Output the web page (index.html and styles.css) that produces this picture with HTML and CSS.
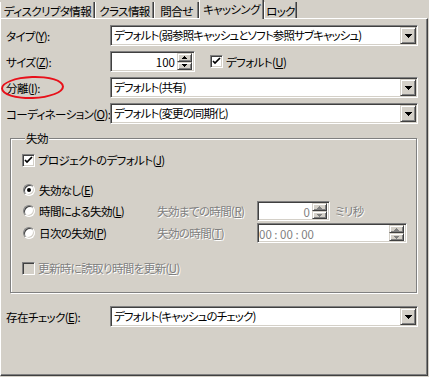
FILE: index.html
```html
<!DOCTYPE html>
<html>
<head>
    <title>キャッシング</title>
    <link rel="stylesheet" href="styles.css">
</head>
<body>
    <div class="tabs">
        <div class="tab" style="width: 95px">ディスクリプタ情報</div>
        <div class="tab" style="width: 59px">クラス情報</div>
        <div class="tab" style="width: 45px">問合せ</div>
        <div class="tab active" style="width: 65px">キャッシング</div>
        <div class="tab" style="width: 33px">ロック</div>
    </div>

    <div class="panel">
        <div class="field">
            <label class="lbl">タイプ(<u>Y</u>):</label>
            <div class="combo">
                <span class="combo-text">デフォルト(弱参照キャッシュとソフト参照サブキャッシュ)</span>
                <span class="btn drop"><svg width="7" height="4"><path d="M0 0h7l-3.5 4z"/></svg></span>
            </div>
        </div>

        <div class="field">
            <label class="lbl">サイズ(<u>Z</u>):</label>
            <div class="size-row">
                <div class="box spin size">
                    <span class="val">100</span>
                    <span class="spin-btns">
                        <span class="btn up"><svg width="5" height="3"><path d="M2.5 0l2.5 3h-5z"/></svg></span>
                        <span class="btn down"><svg width="5" height="3"><path d="M0 0h5l-2.5 3z"/></svg></span>
                    </span>
                </div>
                <span class="check-row">
                    <span class="check"><svg width="9" height="9"><path d="M1 4l2 2 5-5" fill="none" stroke="#000" stroke-width="1.7"/></svg></span>
                    <span>デフォルト(<u>U</u>)</span>
                </span>
            </div>
        </div>

        <div class="field">
            <label class="lbl marked">分離(<u>I</u>):<span class="ring"></span></label>
            <div class="combo">
                <span class="combo-text">デフォルト(共有)</span>
                <span class="btn drop"><svg width="7" height="4"><path d="M0 0h7l-3.5 4z"/></svg></span>
            </div>
        </div>

        <div class="field">
            <label class="lbl">コーディネーション(<u>O</u>):</label>
            <div class="combo">
                <span class="combo-text">デフォルト(変更の同期化)</span>
                <span class="btn drop"><svg width="7" height="4"><path d="M0 0h7l-3.5 4z"/></svg></span>
            </div>
        </div>

        <div class="group">
            <div class="group-title">失効</div>

            <div class="check-row first">
                <span class="check"><svg width="9" height="9"><path d="M1 4l2 2 5-5" fill="none" stroke="#000" stroke-width="1.7"/></svg></span>
                <span>プロジェクトのデフォルト(<u>J</u>)</span>
            </div>

            <div class="opt-row r1">
                <span class="opt"><span class="radio on"></span>失効なし(<u>E</u>)</span>
            </div>

            <div class="opt-row r2">
                <span class="opt"><span class="radio"></span>時間による失効(<u>L</u>)</span>
                <span class="sub off">失効までの時間(<u>R</u>)</span>
                <div class="box spin ms">
                    <span class="val off-val">0</span>
                    <span class="spin-btns">
                        <span class="btn up"><svg width="5" height="3"><path d="M2.5 0l2.5 3h-5z"/></svg></span>
                        <span class="btn down"><svg width="5" height="3"><path d="M0 0h5l-2.5 3z"/></svg></span>
                    </span>
                </div>
                <span class="unit off">ミリ秒</span>
            </div>

            <div class="opt-row r3">
                <span class="opt"><span class="radio"></span>日次の失効(<u>P</u>)</span>
                <span class="sub off">失効の時間(<u>T</u>)</span>
                <div class="box spin time">
                    <span class="val off-val">00 : 00 : 00</span>
                    <span class="spin-btns">
                        <span class="btn up"><svg width="5" height="3"><path d="M2.5 0l2.5 3h-5z"/></svg></span>
                        <span class="btn down"><svg width="5" height="3"><path d="M0 0h5l-2.5 3z"/></svg></span>
                    </span>
                </div>
            </div>

            <div class="check-row last">
                <span class="check disabled"></span>
                <span class="off">更新時に読取り時間を更新(<u>U</u>)</span>
            </div>
        </div>

        <div class="field exist">
            <label class="lbl">存在チェック(<u>E</u>):</label>
            <div class="combo">
                <span class="combo-text">デフォルト(キャッシュのチェック)</span>
                <span class="btn drop"><svg width="7" height="4"><path d="M0 0h7l-3.5 4z"/></svg></span>
            </div>
        </div>
    </div>
</body>
</html>
```

FILE: styles.css
```css
body {
    margin: 0;
    width: 429px;
    height: 377px;
    overflow: hidden;
    background-color: #d4d0c8;
    font-family: "Noto Sans CJK JP", sans-serif;
    font-size: 11.5px;
    line-height: 14px;
    letter-spacing: -0.6px;
    font-feature-settings: "palt";
    color: #000;
}

u {
    text-decoration-thickness: 1px;
    text-underline-offset: 1px;
}

/* tab strip */
.tabs {
    display: flex;
    align-items: flex-end;
    height: 18px;
}

.tab {
    box-sizing: border-box;
    height: 16px;
    padding-top: 2px;
    text-align: center;
    white-space: nowrap;
    border-left: 1px solid #fff;
    border-right: 1px solid #404040;
    box-shadow: inset -1px 0 #808080;
}

.tab.active {
    position: relative;
    z-index: 1;
    height: 19px;
    margin-bottom: -1px;
    padding-top: 2px;
    background-color: #d4d0c8;
}

/* page */
.panel {
    box-sizing: border-box;
    width: 428px;
    height: 358px;
    padding: 6px 9px 0 5px;
    border: 1px solid;
    border-color: #fff #404040 #404040 #fff;
    box-shadow: inset -1px -1px #808080;
}

.field {
    display: flex;
    align-items: center;
    height: 21px;
    margin-bottom: 5px;
}

.lbl {
    width: 104px;
    flex: none;
    white-space: nowrap;
}

.marked {
    position: relative;
}

.ring {
    position: absolute;
    left: -5px;
    top: -5px;
    width: 59px;
    height: 19px;
    border: 2px solid #e8101a;
    border-radius: 50%;
    transform: rotate(-2deg);
}

/* sunken boxes */
.combo,
.box,
.check {
    box-sizing: border-box;
    border: 1px solid;
    border-color: #808080 #fff #fff #808080;
    box-shadow: inset 1px 1px #404040, inset -1px -1px #d4d0c8;
    background-color: #fff;
}

.combo {
    flex: 1;
    display: flex;
    height: 21px;
    padding: 1px;
}

.combo-text {
    flex: 1;
    padding: 1px 0 0 2px;
    white-space: nowrap;
    overflow: hidden;
    letter-spacing: -0.9px;
}

.btn {
    box-sizing: border-box;
    display: flex;
    align-items: center;
    justify-content: center;
    border: 1px solid;
    border-color: #d4d0c8 #404040 #404040 #d4d0c8;
    box-shadow: inset 1px 1px #fff, inset -1px -1px #808080;
    background-color: #d4d0c8;
}

.btn svg {
    display: block;
    shape-rendering: crispEdges;
}

.drop {
    width: 16px;
}

/* spin boxes */
.size-row {
    display: flex;
    align-items: center;
}

.spin {
    display: flex;
    height: 21px;
    padding: 1px;
}

.spin .val {
    flex: 1;
    padding: 2px 2px 0 0;
    text-align: right;
    letter-spacing: 0;
}

.spin-btns {
    display: flex;
    flex-direction: column;
    width: 15px;
    margin-right: 1px;
}

.spin-btns .btn {
    flex: 1;
}

.spin.size {
    width: 85px;
}

.spin.ms {
    width: 73px;
    height: 20px;
}

.spin.time {
    width: 150px;
    height: 20px;
}

.spin.time .val {
    text-align: left;
    padding-left: 0;
}

.spin.ms .btn path,
.spin.time .btn path {
    fill: #808080;
}

.off,
.off-val {
    color: #808080;
    text-shadow: 1px 1px #fff;
}

.off-val {
    text-shadow: none;
}

/* checkbox */
.check-row {
    display: flex;
    align-items: center;
    height: 14px;
    white-space: nowrap;
}

.size-row .check-row {
    margin-left: 15px;
}

.check {
    display: flex;
    align-items: center;
    justify-content: center;
    width: 13px;
    height: 13px;
    margin-right: 3px;
}

.check svg {
    display: block;
}

.check.disabled {
    background-color: #d4d0c8;
}

/* group box */
.group {
    margin: 14px 1px 0 4px;
    padding: 0 0 17px 11px;
    border: 1px solid #808080;
    box-shadow: inset 1px 1px #fff, 1px 1px #fff;
}

.group-title {
    width: max-content;
    margin: -8px 0 0 3px;
    padding: 0 1px;
    background-color: #d4d0c8;
}

.check-row.first {
    margin-top: 8px;
}

.check-row.last {
    margin-top: 18px;
}

.opt-row {
    display: flex;
    align-items: center;
    height: 20px;
    white-space: nowrap;
}

.opt-row.r1 {
    margin-top: 13px;
}

.opt-row.r2 {
    margin-top: 1px;
}

.opt-row.r3 {
    margin-top: 2px;
}

.opt {
    display: flex;
    align-items: center;
    width: 135px;
}

.sub {
    width: 100px;
}

.unit {
    margin-left: 5px;
}

.radio {
    box-sizing: border-box;
    width: 12px;
    height: 12px;
    margin: 0 4px 0 1px;
    border: 1px solid;
    border-color: #808080 #fff #fff #808080;
    border-radius: 50%;
    box-shadow: inset 1px 1px #404040, inset -1px -1px #d4d0c8;
    background-color: #fff;
    display: flex;
    align-items: center;
    justify-content: center;
}

.radio.on::after {
    content: "";
    width: 4px;
    height: 4px;
    border-radius: 50%;
    background-color: #000;
}

.field.exist {
    margin-top: 13px;
}
```
